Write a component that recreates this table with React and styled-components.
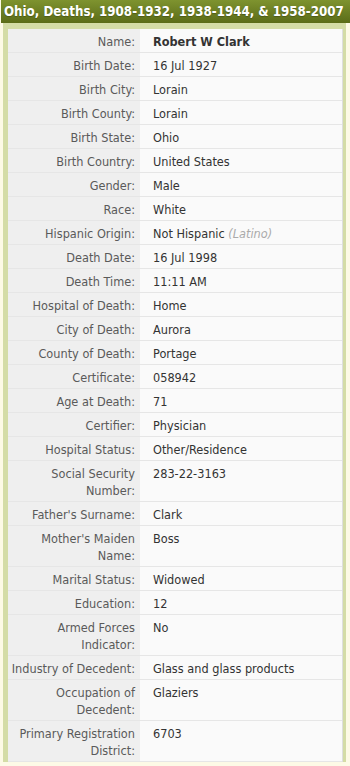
import styled, { createGlobalStyle } from "styled-components";

const GlobalStyle = createGlobalStyle`
  body {
    margin: 0;
    background-color: #fdfae6;
    font-family: "DejaVu Sans Condensed", "DejaVu Sans", sans-serif;
  }
`;

const Page = styled.div`
  width: 350px;
  overflow: hidden;
`;

const Header = styled.div`
  margin-left: 1px;
  height: 23px;
  padding-left: 3px;
  background: linear-gradient(#7e932f, #5b6c18);
  color: #fff;
  font-size: 13.2px;
  font-weight: bold;
  line-height: 24px;
  white-space: nowrap;
  text-shadow: 0 1px 1px rgba(0, 0, 0, 0.25);
`;

const Panel = styled.div`
  width: 335px;
  margin-left: 3px;
  padding: 6px 3px 0 5px;
  background-color: #d4dca6;
`;

const Table = styled.div`
  border-right: 1px solid #dedede;
  background-color: #fafafa;
`;

const Row = styled.div`
  display: grid;
  grid-template-columns: 132px 1fr;
  border-bottom: 1px solid #e6e6e6;
  font-size: 12.6px;
  line-height: 17px;
`;

const Label = styled.div`
  padding: 4px 5px 2px 3px;
  background-color: #efefef;
  color: #5a5a5a;
  text-align: right;
`;

const Value = styled.div`
  padding: 4px 6px 2px 13px;
  color: #333;
  font-weight: ${({ $bold }) => ($bold ? "bold" : "normal")};
`;

const Note = styled.span`
  color: #aaa;
  font-style: italic;
`;

const rows = [
  ["Name:", "Robert W Clark", true],
  ["Birth Date:", "16 Jul 1927"],
  ["Birth City:", "Lorain"],
  ["Birth County:", "Lorain"],
  ["Birth State:", "Ohio"],
  ["Birth Country:", "United States"],
  ["Gender:", "Male"],
  ["Race:", "White"],
  ["Hispanic Origin:", <>Not Hispanic <Note>(Latino)</Note></>],
  ["Death Date:", "16 Jul 1998"],
  ["Death Time:", "11:11 AM"],
  ["Hospital of Death:", "Home"],
  ["City of Death:", "Aurora"],
  ["County of Death:", "Portage"],
  ["Certificate:", "058942"],
  ["Age at Death:", "71"],
  ["Certifier:", "Physician"],
  ["Hospital Status:", "Other/Residence"],
  ["Social Security Number:", "283-22-3163"],
  ["Father's Surname:", "Clark"],
  ["Mother's Maiden Name:", "Boss"],
  ["Marital Status:", "Widowed"],
  ["Education:", "12"],
  ["Armed Forces Indicator:", "No"],
  ["Industry of Decedent:", "Glass and glass products"],
  ["Occupation of Decedent:", "Glaziers"],
  ["Primary Registration District:", "6703"],
];

export default function App() {
  return (
    <Page>
      <GlobalStyle />
      <Header>Ohio, Deaths, 1908-1932, 1938-1944, &amp; 1958-2007</Header>
      <Panel>
        <Table>
          {rows.map(([label, value, bold]) => (
            <Row key={label}>
              <Label>{label}</Label>
              <Value $bold={bold}>{value}</Value>
            </Row>
          ))}
        </Table>
      </Panel>
    </Page>
  );
}
